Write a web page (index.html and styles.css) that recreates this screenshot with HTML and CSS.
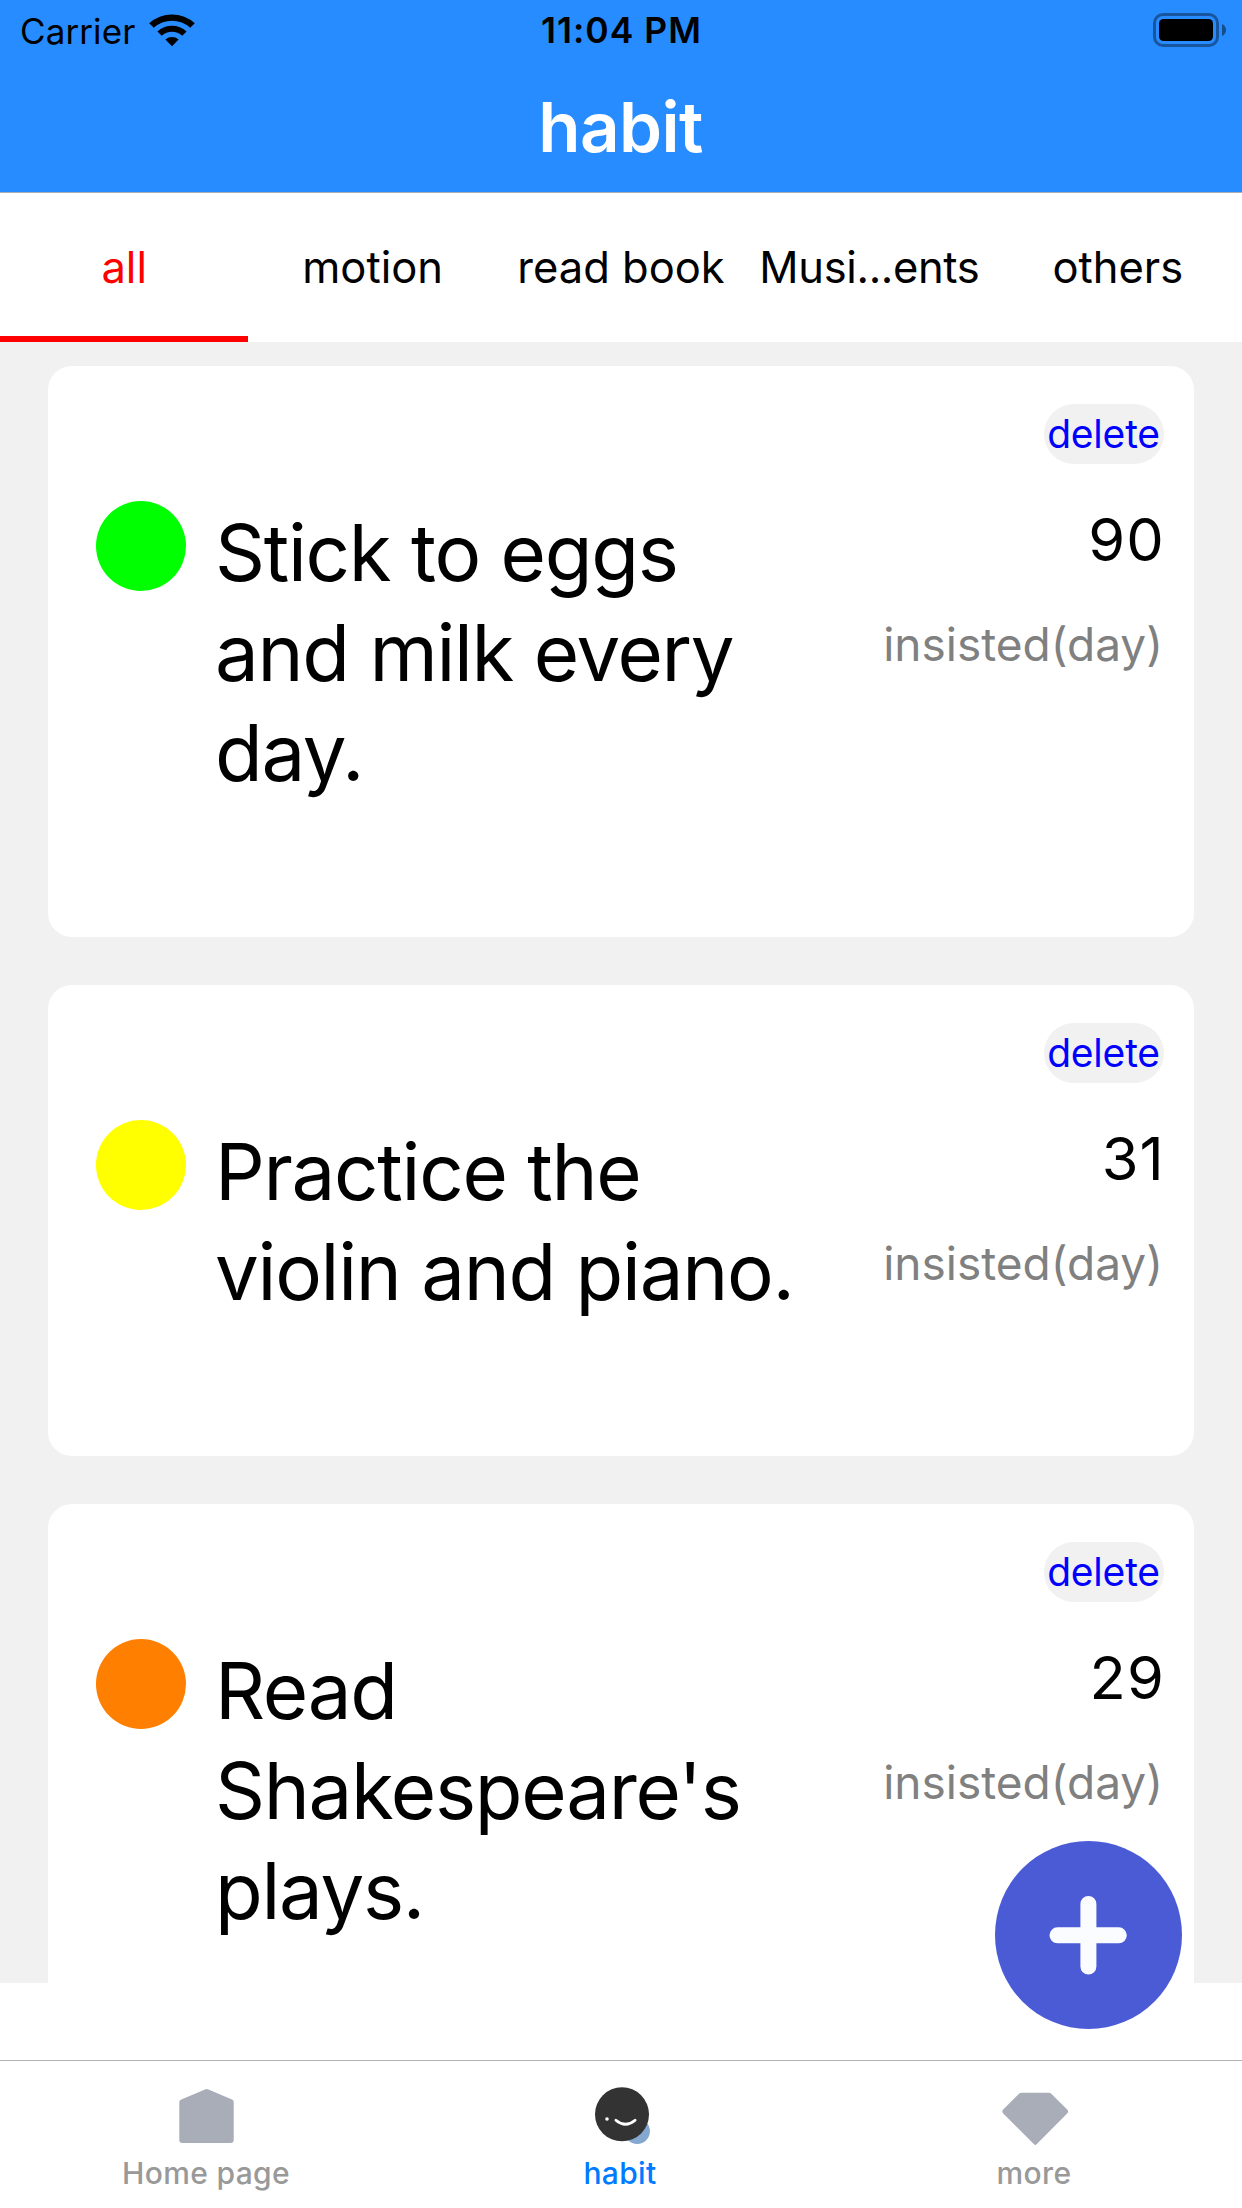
FILE: index.html
```
<!DOCTYPE html>
<html lang="en">
<head>
  <meta charset="utf-8">
  <title>habit</title>
  <link rel="stylesheet" href="styles.css">
</head>
<body>
  <div class="app">
    <header class="header">
      <div class="status">
        <div class="status-left">
          <span class="carrier">Carrier</span>
          <svg class="wifi" viewBox="0 0 48 34" aria-hidden="true">
            <path d="M1.2 10.2A34 34 0 0 1 46.8 10.2L42.2 14.8A27 27 0 0 0 5.8 14.8Z"/>
            <path d="M9.4 18.4A21.5 21.5 0 0 1 38.6 18.4L34.2 22.8A15 15 0 0 0 13.8 22.8Z"/>
            <path d="M17.4 26.6A10 10 0 0 1 30.6 26.6L24 33.2Z"/>
          </svg>
        </div>
        <span class="time">11:04 PM</span>
        <svg class="battery" viewBox="0 0 74 34" aria-hidden="true">
          <rect class="battery-case" x="1.5" y="1.5" width="63" height="31" rx="8.5"/>
          <rect x="6" y="6" width="54" height="22" rx="4.5"/>
          <path class="battery-cap" d="M69 11C74.4 13.4 74.4 20.6 69 23Z"/>
        </svg>
      </div>
      <h1 class="title">habit</h1>
    </header>

    <nav class="tabs">
      <a class="tab tab-active">all</a>
      <a class="tab">motion</a>
      <a class="tab">read book</a>
      <a class="tab tab-long">Musi...ents</a>
      <a class="tab">others</a>
    </nav>

    <main class="list">
      <article class="card">
        <button class="delete">delete</button>
        <span class="dot dot-green"></span>
        <h2 class="name">Stick to eggs and milk every day.</h2>
        <div class="stats">
          <span class="count">90</span>
          <span class="unit">insisted(day)</span>
        </div>
      </article>
      <article class="card">
        <button class="delete">delete</button>
        <span class="dot dot-yellow"></span>
        <h2 class="name">Practice the violin and piano.</h2>
        <div class="stats">
          <span class="count">31</span>
          <span class="unit">insisted(day)</span>
        </div>
      </article>
      <article class="card">
        <button class="delete">delete</button>
        <span class="dot dot-orange"></span>
        <h2 class="name">Read Shakespeare's plays.</h2>
        <div class="stats">
          <span class="count">29</span>
          <span class="unit">insisted(day)</span>
        </div>
      </article>
    </main>

    <footer class="tabbar">
      <a class="item">
        <svg class="icon" viewBox="0 0 72 72" aria-hidden="true">
          <path class="gray" d="M10.3 19.6L34 9.5Q35.7 8.6 37.4 9.5L61 19.6Q62.7 20.4 62.7 22V60Q62.7 63 59.7 63H11.3Q8.3 63 8.3 60V22Q8.3 20.4 10.3 19.6Z"/>
        </svg>
        <span class="label">Home page</span>
      </a>
      <a class="item item-active">
        <svg class="icon" viewBox="0 0 72 72" aria-hidden="true">
          <circle class="face-shade" cx="52.2" cy="51.2" r="12.7"/>
          <circle class="face" cx="37" cy="34.3" r="27"/>
          <circle class="eye" cx="22" cy="39" r="1.8"/>
          <path class="smile" d="M30.9 40.2Q40.5 48.4 50.1 40.2"/>
        </svg>
        <span class="label">habit</span>
      </a>
      <a class="item">
        <svg class="icon" viewBox="0 0 72 72" aria-hidden="true">
          <path class="gray" d="M22.5 12.7H49.8Q51.3 12.7 52.3 13.7L68.2 29.6Q70 31.4 68.4 33.2L37.6 64.2Q36.3 65.6 35 64.2L4 33.2Q2.4 31.4 4.2 29.6L20 13.7Q21 12.7 22.5 12.7Z"/>
        </svg>
        <span class="label">more</span>
      </a>
    </footer>

    <button class="add" aria-label="Add habit">
      <svg viewBox="0 0 187 188" aria-hidden="true">
        <ellipse class="add-disc" cx="93.5" cy="94" rx="93.5" ry="94"/>
        <path class="add-plus" d="M93.4 63V125.5M62.5 94.3H123.8"/>
      </svg>
    </button>
  </div>
</body>
</html>
```
FILE: styles.css
```
* {
  box-sizing: border-box;
}

body {
  margin: 0;
  background: #fff;
  color: #000;
  font-family: Inter, "Liberation Sans", sans-serif;
}

h1,
h2 {
  margin: 0;
  font-weight: 400;
}

button {
  border: 0;
  padding: 0;
  font-family: inherit;
}

.app {
  position: relative;
  display: flex;
  flex-direction: column;
  width: 1242px;
  height: 2208px;
  overflow: hidden;
}

/* Header */
.header {
  height: 193px;
  background: #268cff;
  border-bottom: 1px solid #a9adb5;
}

.status {
  display: grid;
  grid-template-columns: 1fr auto 1fr;
  height: 62px;
  padding: 0 15px 0 20px;
  line-height: 62px;
}

.status-left {
  display: flex;
}

.carrier {
  font-size: 35px;
  letter-spacing: 0.1px;
}

.wifi {
  width: 48px;
  height: 34px;
  margin: 13px 0 0 13px;
}

.time {
  margin: 0 4px 0 0;
  font-size: 35.5px;
  font-weight: 600;
  letter-spacing: 1px;
}

.battery {
  justify-self: end;
  width: 74px;
  height: 34px;
  margin-top: 13px;
}

.battery-case {
  fill: none;
  stroke: #000;
  stroke-width: 3;
  opacity: 0.38;
}

.battery-cap {
  opacity: 0.45;
}

.title {
  padding-right: 1px;
  color: #fff;
  font-size: 69px;
  font-weight: 600;
  line-height: 130px;
  letter-spacing: -0.6px;
  text-align: center;
}

/* Category tabs */
.tabs {
  display: grid;
  grid-template-columns: repeat(5, 1fr);
  height: 149px;
}

.tab {
  font-size: 43.5px;
  line-height: 149px;
  text-align: center;
  white-space: nowrap;
}

.tab-long {
  letter-spacing: -0.35px;
}

.tab-active {
  color: #f00;
  box-shadow: inset 0 -6px #f00;
}

/* Habit list */
.list {
  display: flex;
  flex-direction: column;
  gap: 48px;
  height: 1641px;
  padding: 24px 48px 0;
  background: #f1f1f1;
  overflow: hidden;
}

.card {
  flex: none;
  display: grid;
  grid-template-columns: 90px 594px 1fr;
  grid-template-rows: 60px auto;
  column-gap: 29px;
  row-gap: 37px;
  padding: 38px 30px 134px 48px;
  border-radius: 24px;
  background: #fff;
}

.delete {
  grid-column: 1 / -1;
  justify-self: end;
  width: 120px;
  height: 60px;
  padding-right: 1px;
  border-radius: 30px;
  background: #f1f1f1;
  color: #00f;
  font-size: 39px;
  line-height: 60px;
  letter-spacing: -0.2px;
}

.dot {
  width: 90px;
  height: 90px;
  border-radius: 50%;
}

.dot-green {
  background: #0f0;
}

.dot-yellow {
  background: #ff0;
}

.dot-orange {
  background: #ff8000;
}

.name {
  padding-top: 2px;
  font-size: 78px;
  line-height: 100px;
  letter-spacing: -1.3px;
}

.stats {
  display: flex;
  flex-direction: column;
  align-items: flex-end;
  gap: 35px;
  padding-top: 3px;
  line-height: 70px;
}

.count {
  margin-right: -1px;
  font-size: 59.5px;
  letter-spacing: 1.2px;
}

.unit {
  margin-right: 1px;
  color: #808080;
  font-size: 46px;
}

/* Bottom navigation */
.tabbar {
  display: grid;
  grid-template-columns: repeat(3, 1fr);
  height: 148px;
  margin-top: auto;
  padding-top: 19px;
  border-top: 1px solid #b2b2b2;
}

.item {
  display: flex;
  flex-direction: column;
  align-items: center;
  gap: 3px;
  color: #999;
}

.item-active {
  color: #007aff;
}

.icon {
  width: 72px;
  height: 72px;
}

.label {
  margin-right: 2px;
  font-size: 30px;
  font-weight: 500;
  line-height: 36px;
  letter-spacing: 0.35px;
}

.gray {
  fill: #a8adb7;
}

.face {
  fill: #333;
}

.face-shade {
  fill: #84a8d0;
}

.eye {
  fill: #fff;
}

.smile {
  fill: none;
  stroke: #fff;
  stroke-width: 2.8;
  stroke-linecap: round;
}

/* Floating add button, above the list and the navigation */
.add {
  position: absolute;
  right: 60px;
  bottom: 179.5px;
  width: 187px;
  height: 188px;
  background: none;
}

.add svg {
  display: block;
  width: 100%;
  height: 100%;
}

.add-disc {
  fill: #4b5bd6;
}

.add-plus {
  fill: none;
  stroke: #fbfcff;
  stroke-width: 16;
  stroke-linecap: round;
}
```
